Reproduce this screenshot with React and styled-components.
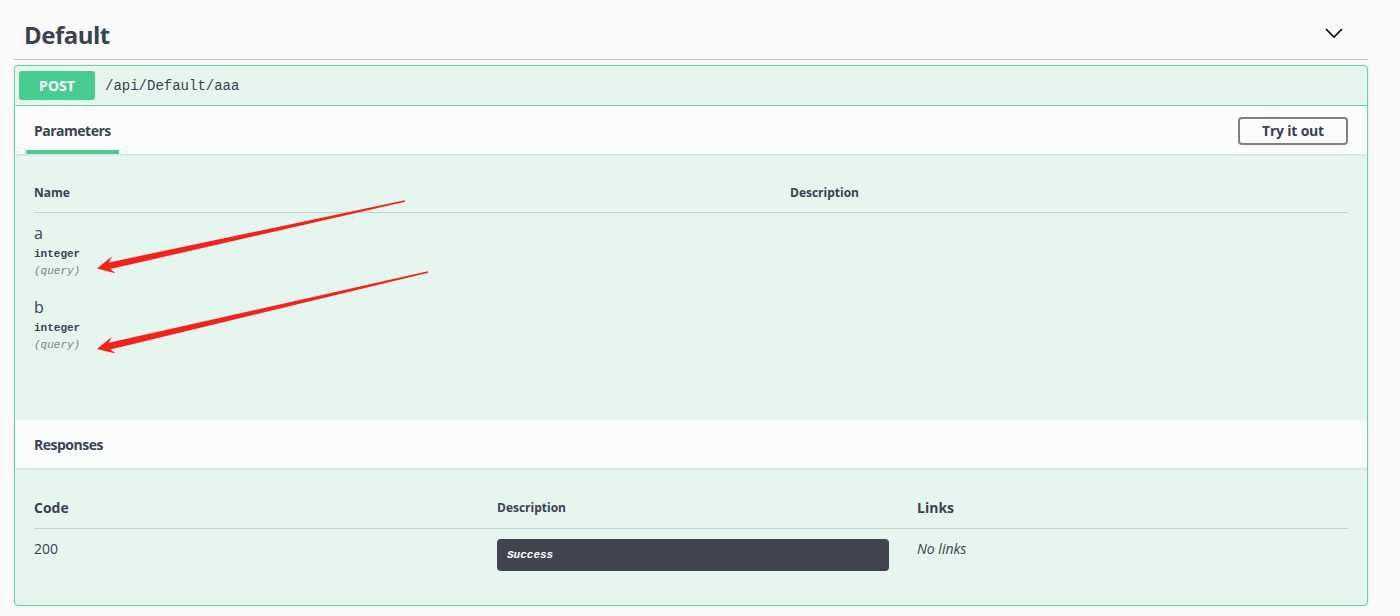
import React from 'react'
import styled, { createGlobalStyle } from 'styled-components'

const GlobalStyle = createGlobalStyle`
  html, body {
    margin: 0;
    padding: 0;
    background: #fafafa;
  }
  body {
    font-family: "Open Sans", "Liberation Sans", sans-serif;
    color: #3b4151;
  }
`;

const Page = styled.div`
  position: relative;
  width: 1400px;
  height: 616px;
  padding: 0 32px 0 14px;
  box-sizing: border-box;
  overflow: hidden;
`;

const TagHeader = styled.div`
  display: flex;
  align-items: center;
  justify-content: space-between;
  padding: 17px 24px 6px 10px;
  border-bottom: 1px solid rgba(59, 65, 81, 0.3);
`;

const TagTitle = styled.h3`
  margin: 0;
  font-size: 24px;
  line-height: 36px;
  font-weight: 700;
  letter-spacing: -0.5px;
  color: #3b4151;
`;

const Chevron = styled.svg`
  width: 20px;
  height: 20px;
  margin-top: -4px;
`;

const OpBlock = styled.div`
  margin-top: 5px;
  border: 1px solid #6fd2a5;
  border-radius: 4px;
  background: rgba(73, 204, 144, 0.1);
  box-shadow: 0 0 3px rgba(0, 0, 0, 0.1);
`;

const Summary = styled.div`
  display: flex;
  align-items: center;
  padding: 5px 4px;
  border-bottom: 1px solid #6fd2a5;
`;

const MethodBadge = styled.span`
  display: inline-flex;
  align-items: center;
  justify-content: center;
  width: 76px;
  height: 29px;
  border-radius: 3px;
  background: #49cc90;
  color: #fff;
  font-size: 14px;
  font-weight: 700;
`;

const PathText = styled.span`
  margin-left: 10px;
  font-family: "Liberation Mono", "DejaVu Sans Mono", monospace;
  font-size: 14px;
  color: #3b4151;
`;

const SectionHeader = styled.div`
  display: flex;
  align-items: stretch;
  justify-content: space-between;
  height: 48px;
  padding: 0 19px 0 11px;
  background: rgba(255, 255, 255, 0.8);
  box-shadow: 0 1px 2px rgba(0, 0, 0, 0.1);
`;

const TabItem = styled.div`
  display: flex;
  align-items: center;
  padding: 4px 8px 0;
  font-size: 14px;
  font-weight: 700;
  letter-spacing: -0.5px;
  border-bottom: 4px solid ${p => (p.$active ? '#49cc90' : 'transparent')};
`;

const TryButton = styled.button`
  align-self: center;
  width: 110px;
  height: 28px;
  margin-top: 1px;
  padding: 0;
  border: 2px solid #808080;
  border-radius: 4px;
  background: transparent;
  font-family: "Open Sans", "Liberation Sans", sans-serif;
  font-size: 14px;
  font-weight: 700;
  letter-spacing: -0.2px;
  color: #3b4151;
`;

const SectionBody = styled.div`
  padding: ${p => p.$pad};
`;

const TableRow = styled.div`
  display: grid;
  grid-template-columns: ${p => p.$cols};
  align-items: ${p => p.$align || 'start'};
  padding: ${p => p.$pad};
  border-bottom: ${p => (p.$head ? '1px solid rgba(59, 65, 81, 0.2)' : 'none')};
`;

const HeadCell = styled.div`
  font-size: ${p => p.$size || 12}px;
  line-height: 19px;
  font-weight: 700;
  color: #3b4151;
`;

const ParamName = styled.div`
  font-size: 16px;
  line-height: 20px;
  color: #3b4151;
`;

const ParamType = styled.div`
  margin-top: 4px;
  font-family: "Liberation Mono", "DejaVu Sans Mono", monospace;
  font-size: 11px;
  line-height: 14px;
  font-weight: 700;
  color: #3b4151;
`;

const ParamIn = styled.div`
  margin-top: 3px;
  font-family: "Liberation Mono", "DejaVu Sans Mono", monospace;
  font-size: 11px;
  line-height: 14px;
  font-style: italic;
  color: #808080;
`;

const CodeCell = styled.div`
  font-size: 14px;
  line-height: 20px;
  color: #3b4151;
`;

const DescBox = styled.div`
  width: 392px;
  padding: 10px;
  box-sizing: border-box;
  border-radius: 4px;
  background: #41444e;
  font-family: "Liberation Mono", "DejaVu Sans Mono", monospace;
  font-size: 11px;
  line-height: 12px;
  font-weight: 700;
  font-style: italic;
  color: #fff;
`;

const NoLinks = styled.div`
  font-size: 14px;
  line-height: 20px;
  font-style: italic;
  color: #3b4151;
`;

const Overlay = styled.svg`
  position: absolute;
  top: 0;
  left: 0;
  width: 1400px;
  height: 616px;
  pointer-events: none;
`;

// red annotation arrow, tip -> tail
function arrowPoints(tip, tail) {
  const dx = tail[0] - tip[0];
  const dy = tail[1] - tip[1];
  const len = Math.hypot(dx, dy);
  const ux = dx / len, uy = dy / len;
  const nx = -uy, ny = ux;
  const at = (d, w) => [tip[0] + ux * d + nx * w, tip[1] + uy * d + ny * w];
  const pts = [
    tip,
    at(17, 8.5),
    at(13, 3.4),
    at(len, 0.7),
    at(len, -0.7),
    at(13, -3.4),
    at(17, -8.5),
  ];
  return pts.map(p => p[0].toFixed(1) + ',' + p[1].toFixed(1)).join(' ');
}

const params = [
  { name: 'a', type: 'integer', where: '(query)' },
  { name: 'b', type: 'integer', where: '(query)' },
];

export default function App() {
  return (
    <>
      <GlobalStyle />
      <Page>
        <TagHeader>
          <TagTitle>Default</TagTitle>
          <Chevron viewBox="0 0 20 20">
            <path d="M2 6 L10 14 L18 6" fill="none" stroke="#000" strokeWidth="1.6" />
          </Chevron>
        </TagHeader>

        <OpBlock>
          <Summary>
            <MethodBadge>POST</MethodBadge>
            <PathText>/api/Default/aaa</PathText>
          </Summary>

          <SectionHeader>
            <TabItem $active>Parameters</TabItem>
            <TryButton>Try it out</TryButton>
          </SectionHeader>
          <SectionBody $pad="18px 19px 59px">
            <TableRow $cols="756px 1fr" $align="center" $pad="11px 0 10px" $head>
              <HeadCell>Name</HeadCell>
              <HeadCell>Description</HeadCell>
            </TableRow>
            {params.map(p => (
              <TableRow key={p.name} $cols="756px 1fr" $pad="10px 0 9px">
                <div>
                  <ParamName>{p.name}</ParamName>
                  <ParamType>{p.type}</ParamType>
                  <ParamIn>{p.where}</ParamIn>
                </div>
                <div />
              </TableRow>
            ))}
          </SectionBody>

          <SectionHeader>
            <TabItem>Responses</TabItem>
          </SectionHeader>
          <SectionBody $pad="20px 19px 24px">
            <TableRow $cols="463px 420px 1fr" $align="center" $pad="10px 0 11px" $head>
              <HeadCell $size={14}>Code</HeadCell>
              <HeadCell>Description</HeadCell>
              <HeadCell $size={14}>Links</HeadCell>
            </TableRow>
            <TableRow $cols="463px 420px 1fr" $pad="10px 0">
              <CodeCell>200</CodeCell>
              <DescBox>Success</DescBox>
              <NoLinks>No links</NoLinks>
            </TableRow>
          </SectionBody>
        </OpBlock>

        <Overlay viewBox="0 0 1400 616">
          <polygon points={arrowPoints([97, 268.5], [405, 201])} fill="#f2231b" />
          <polygon points={arrowPoints([97, 349], [428, 272])} fill="#f2231b" />
        </Overlay>
      </Page>
    </>
  )
}
